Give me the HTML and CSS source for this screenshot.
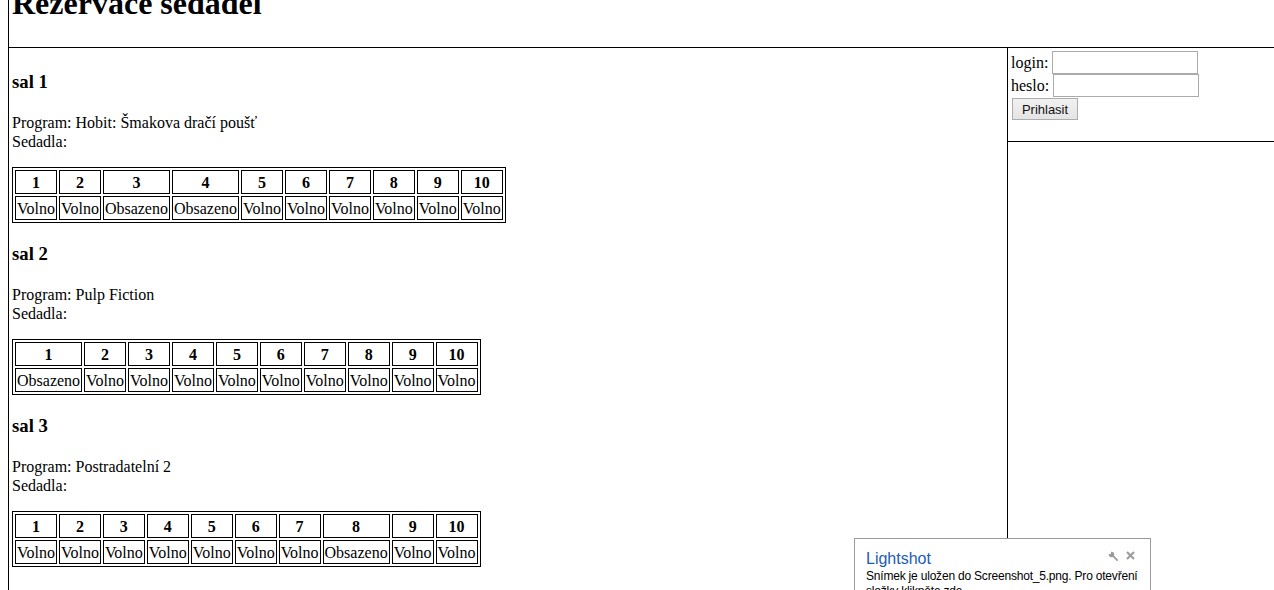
FILE: index.html
```html
<!DOCTYPE html>
<html lang="cs">
<head>
<meta charset="utf-8">
<title>Rezervace sedadel</title>
<link rel="stylesheet" href="styles.css">
</head>
<body>
<div class="page">
  <header class="top"><h1>Rezervace sedadel</h1></header>
  <div class="main">
    <div class="content">
      <section class="hall">
        <h3>sal 1</h3>
        <p>Program: Hobit: Šmakova dračí poušť<br>Sedadla:</p>
        <table class="seats">
          <tr><th>1</th><th>2</th><th>3</th><th>4</th><th>5</th><th>6</th><th>7</th><th>8</th><th>9</th><th>10</th></tr>
          <tr><td>Volno</td><td>Volno</td><td>Obsazeno</td><td>Obsazeno</td><td>Volno</td><td>Volno</td><td>Volno</td><td>Volno</td><td>Volno</td><td>Volno</td></tr>
        </table>
      </section>
      <section class="hall">
        <h3>sal 2</h3>
        <p>Program: Pulp Fiction<br>Sedadla:</p>
        <table class="seats">
          <tr><th>1</th><th>2</th><th>3</th><th>4</th><th>5</th><th>6</th><th>7</th><th>8</th><th>9</th><th>10</th></tr>
          <tr><td>Obsazeno</td><td>Volno</td><td>Volno</td><td>Volno</td><td>Volno</td><td>Volno</td><td>Volno</td><td>Volno</td><td>Volno</td><td>Volno</td></tr>
        </table>
      </section>
      <section class="hall">
        <h3>sal 3</h3>
        <p>Program: Postradatelní 2<br>Sedadla:</p>
        <table class="seats">
          <tr><th>1</th><th>2</th><th>3</th><th>4</th><th>5</th><th>6</th><th>7</th><th>8</th><th>9</th><th>10</th></tr>
          <tr><td>Volno</td><td>Volno</td><td>Volno</td><td>Volno</td><td>Volno</td><td>Volno</td><td>Volno</td><td>Obsazeno</td><td>Volno</td><td>Volno</td></tr>
        </table>
      </section>
    </div>
    <aside class="side">
      <form class="login">
        <div class="row"><span>login:</span><input class="field" type="text"></div>
        <div class="row"><span>heslo:</span><input class="field" type="password"></div>
        <button class="btn" type="button">Prihlasit</button>
      </form>
    </aside>
  </div>
</div>

<div class="toast">
  <div class="toast-title">Lightshot</div>
  <div class="toast-msg">Snímek je uložen do Screenshot_5.png. Pro otevření složky klikněte zde.</div>
  <svg class="ico-wrench" width="11" height="11" viewBox="0 0 12 12"><path d="M3.2 0.8 L3.2 3.2 L0.8 3.2 A3.2 3.2 0 0 0 5.3 6.6 L9.4 10.7 Q10.1 11.3 10.7 10.7 Q11.3 10.1 10.7 9.4 L6.6 5.3 A3.2 3.2 0 0 0 3.2 0.8 Z" fill="#9a9a9a"/></svg>
  <svg class="ico-close" width="9" height="9" viewBox="0 0 9 9"><path d="M1 1 L8 8 M8 1 L1 8" stroke="#9a9a9a" stroke-width="2"/></svg>
</div>
</body>
</html>
```
FILE: styles.css
```css
html, body {
  margin: 0;
  padding: 0;
}
body {
  margin-left: 8px;
  font-family: "Liberation Serif", "Times New Roman", serif;
  font-size: 16px;
  color: #000;
  background: #fff;
  overflow: hidden;
}
.page {
  border-left: 1px solid #000;
}
.top {
  display: flow-root;
  height: 47px;
  padding-left: 3px;
  border-bottom: 1px solid #000;
}
.top h1 {
  margin: -15px 0 0;
  font-size: 32px;
  line-height: 37px;
  font-weight: bold;
}
.main {
  display: grid;
  grid-template-columns: 999px 1fr;
  min-height: 560px;
}
.content {
  padding: 3px;
  border-right: 1px solid #000;
}
.hall h3 {
  margin: 19.5px 0 20.5px;
  font-size: 18.72px;
  line-height: 21.5px;
  font-weight: bold;
}
.hall p {
  margin: 0 0 16px;
  line-height: 19.3px;
}
.seats {
  border: 1px solid #000;
  border-spacing: 2px;
  margin-bottom: 0.5px;
}
.seats th,
.seats td {
  border: 1px solid #000;
  padding: 2px 1px 0;
  line-height: 20px;
  text-align: center;
}
.seats th {
  font-weight: bold;
}
.login {
  margin: 0;
  padding: 3px 3px 21px;
  border-bottom: 1px solid #000;
}
.row {
  display: flex;
  align-items: center;
  gap: 4px;
  height: 23px;
}
.field {
  box-sizing: border-box;
  width: 146px;
  height: 23px;
  margin: 0;
  padding: 1px 2px;
  border: 1px solid #ababab;
  background: #fff;
  font: 13px "Liberation Sans", Arial, sans-serif;
}
.btn {
  display: block;
  box-sizing: border-box;
  width: 66px;
  height: 22px;
  margin: 1px 0 0 1px;
  padding: 0;
  border: 1px solid #adadad;
  background: linear-gradient(#f1f1f1, #e4e4e4);
  font: 13px "Liberation Sans", Arial, sans-serif;
  color: #111;
}
.toast {
  position: fixed;
  left: 854px;
  top: 538px;
  width: 297px;
  height: 80px;
  box-sizing: border-box;
  border: 1px solid #9c9c9c;
  background: #fff;
  padding: 10px 0 0 11px;
  font-family: "Liberation Sans", Arial, sans-serif;
}
.toast-title {
  font-size: 16px;
  line-height: 20px;
  color: #1d5cb6;
}
.toast-msg {
  font-size: 12px;
  letter-spacing: -0.2px;
  line-height: 15px;
  color: #000;
  padding-right: 8px;
}
.ico-wrench {
  position: absolute;
  left: 253px;
  top: 12px;
}
.ico-close {
  position: absolute;
  left: 271px;
  top: 12px;
}
```
